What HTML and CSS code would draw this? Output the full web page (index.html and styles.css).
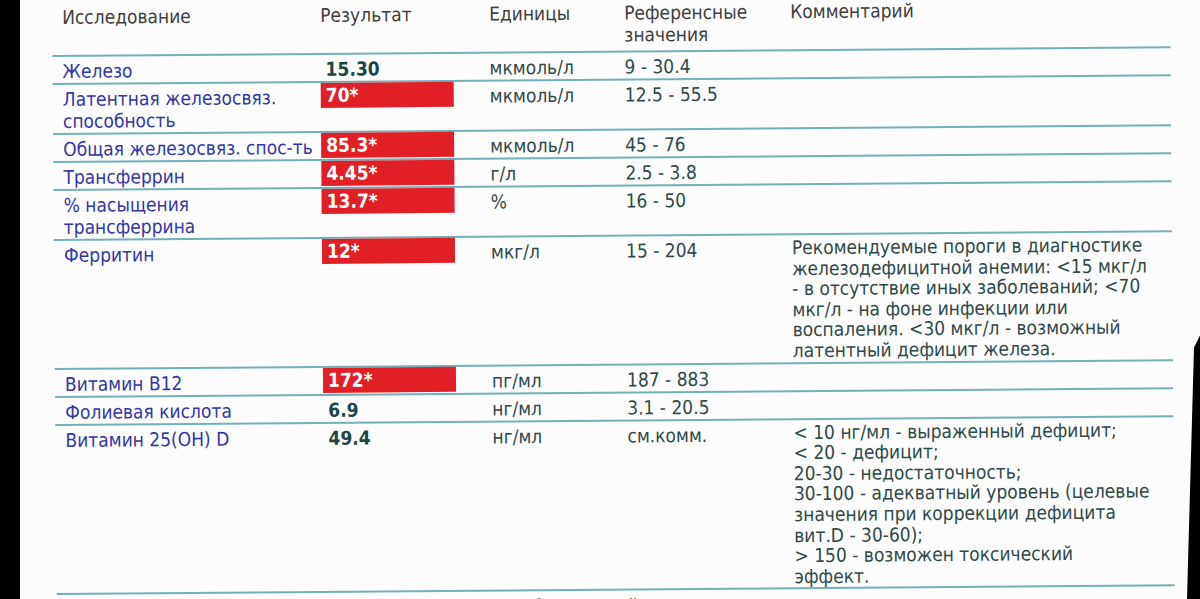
FILE: index.html
```html
<!DOCTYPE html>
<html lang="ru">
<head>
<meta charset="utf-8">
<title>Результаты исследования</title>
<link rel="stylesheet" href="styles.css">
</head>
<body>
<div class="frame">
  <div class="edge-left"></div>
  <div class="paper">
    <div class="sheet">
      <div class="row head">
        <div class="c name">Исследование</div>
        <div class="c res">Результат</div>
        <div class="c unit">Единицы</div>
        <div class="c ref">Референсные<br>значения</div>
        <div class="c com">Комментарий</div>
      </div>
      <div class="row">
        <div class="c name">Железо</div>
        <div class="c res"><span class="val">15.30</span></div>
        <div class="c unit">мкмоль/л</div>
        <div class="c ref">9 - 30.4</div>
        <div class="c com"></div>
      </div>
      <div class="row">
        <div class="c name">Латентная железосвяз.<br>способность</div>
        <div class="c res"><span class="flag">70*</span></div>
        <div class="c unit">мкмоль/л</div>
        <div class="c ref">12.5 - 55.5</div>
        <div class="c com"></div>
      </div>
      <div class="row">
        <div class="c name">Общая железосвяз. спос-ть</div>
        <div class="c res"><span class="flag">85.3*</span></div>
        <div class="c unit">мкмоль/л</div>
        <div class="c ref">45 - 76</div>
        <div class="c com"></div>
      </div>
      <div class="row">
        <div class="c name">Трансферрин</div>
        <div class="c res"><span class="flag">4.45*</span></div>
        <div class="c unit">г/л</div>
        <div class="c ref">2.5 - 3.8</div>
        <div class="c com"></div>
      </div>
      <div class="row">
        <div class="c name">% насыщения<br>трансферрина</div>
        <div class="c res"><span class="flag">13.7*</span></div>
        <div class="c unit">%</div>
        <div class="c ref">16 - 50</div>
        <div class="c com"></div>
      </div>
      <div class="row">
        <div class="c name">Ферритин</div>
        <div class="c res"><span class="flag">12*</span></div>
        <div class="c unit">мкг/л</div>
        <div class="c ref">15 - 204</div>
        <div class="c com">Рекомендуемые пороги в диагностике<br>железодефицитной анемии: &lt;15 мкг/л<br>- в отсутствие иных заболеваний; &lt;70<br>мкг/л - на фоне инфекции или<br>воспаления. &lt;30 мкг/л - возможный<br>латентный дефицит железа.</div>
      </div>
      <div class="row">
        <div class="c name">Витамин B12</div>
        <div class="c res"><span class="flag">172*</span></div>
        <div class="c unit">пг/мл</div>
        <div class="c ref">187 - 883</div>
        <div class="c com"></div>
      </div>
      <div class="row">
        <div class="c name">Фолиевая кислота</div>
        <div class="c res"><span class="val">6.9</span></div>
        <div class="c unit">нг/мл</div>
        <div class="c ref">3.1 - 20.5</div>
        <div class="c com"></div>
      </div>
      <div class="row">
        <div class="c name">Витамин 25(OH) D</div>
        <div class="c res"><span class="val">49.4</span></div>
        <div class="c unit">нг/мл</div>
        <div class="c ref">см.комм.</div>
        <div class="c com">&lt; 10 нг/мл - выраженный дефицит;<br>&lt; 20 - дефицит;<br>20-30 - недостаточность;<br>30-100 - адекватный уровень (целевые<br>значения при коррекции дефицита<br>вит.D - 30-60);<br>&gt; 150 - возможен токсический<br>эффект.</div>
      </div>
      <div class="footer">Исполнитель: Ерёменко Н.В. - врач клинической лабораторной диагностики</div>
    </div>
  </div>
  <div class="edge-right"></div>
</div>
</body>
</html>
```

FILE: styles.css
```css
html, body {
  margin: 0;
  padding: 0;
  height: 100%;
  overflow: hidden;
  background: #000;
}

.frame {
  position: relative;
  display: flex;
  height: 599px;
  width: 1200px;
  overflow: hidden;
}

.edge-left {
  flex: 0 0 20px;
  background: #000;
}

.paper {
  flex: 1 1 auto;
  background: #fcfcfc;
  overflow: hidden;
}

.sheet {
  width: 1118px;
  margin-left: 32px;
  transform: rotate(-0.45deg);
  transform-origin: 0 0;
  font-family: "DejaVu Sans Condensed", "DejaVu Sans", sans-serif;
  font-size: 19px;
  line-height: 22px;
  color: #2f4848;
}

.row {
  display: grid;
  grid-template-columns: 268px 169px 135px 166px 380px;
  border-bottom: 2px solid #74afb8;
}

.c {
  padding-top: 3px;
  padding-bottom: 1px;
}

.name {
  padding-left: 10px;
  color: #3236a4;
}

.head .c {
  color: #3e3e3e;
  padding-top: 6px;
  padding-bottom: 5px;
}

.com {
  line-height: 20.6px;
  padding-top: 2px;
}

.head .com {
  line-height: 22px;
}

.res {
  padding-top: 0;
  padding-bottom: 0;
}

.val {
  display: block;
  font-weight: bold;
  font-size: 19px;
  color: #1d4545;
  padding-top: 3px;
  padding-left: 5px;
  line-height: 22px;
}

.flag {
  display: block;
  width: 128px;
  height: 25px;
  line-height: 25px;
  padding-left: 5px;
  background: #e11f27;
  color: #fff;
  font-weight: bold;
  font-size: 19px;
}

.footer {
  padding: 4px 0 0 10px;
  color: #2f3a3a;
}

.edge-right {
  position: absolute;
  top: 0;
  right: 0;
  width: 20px;
  height: 599px;
  background: #000;
  clip-path: polygon(100% 56%, 70% 58%, 35% 100%, 100% 100%);
}
```
